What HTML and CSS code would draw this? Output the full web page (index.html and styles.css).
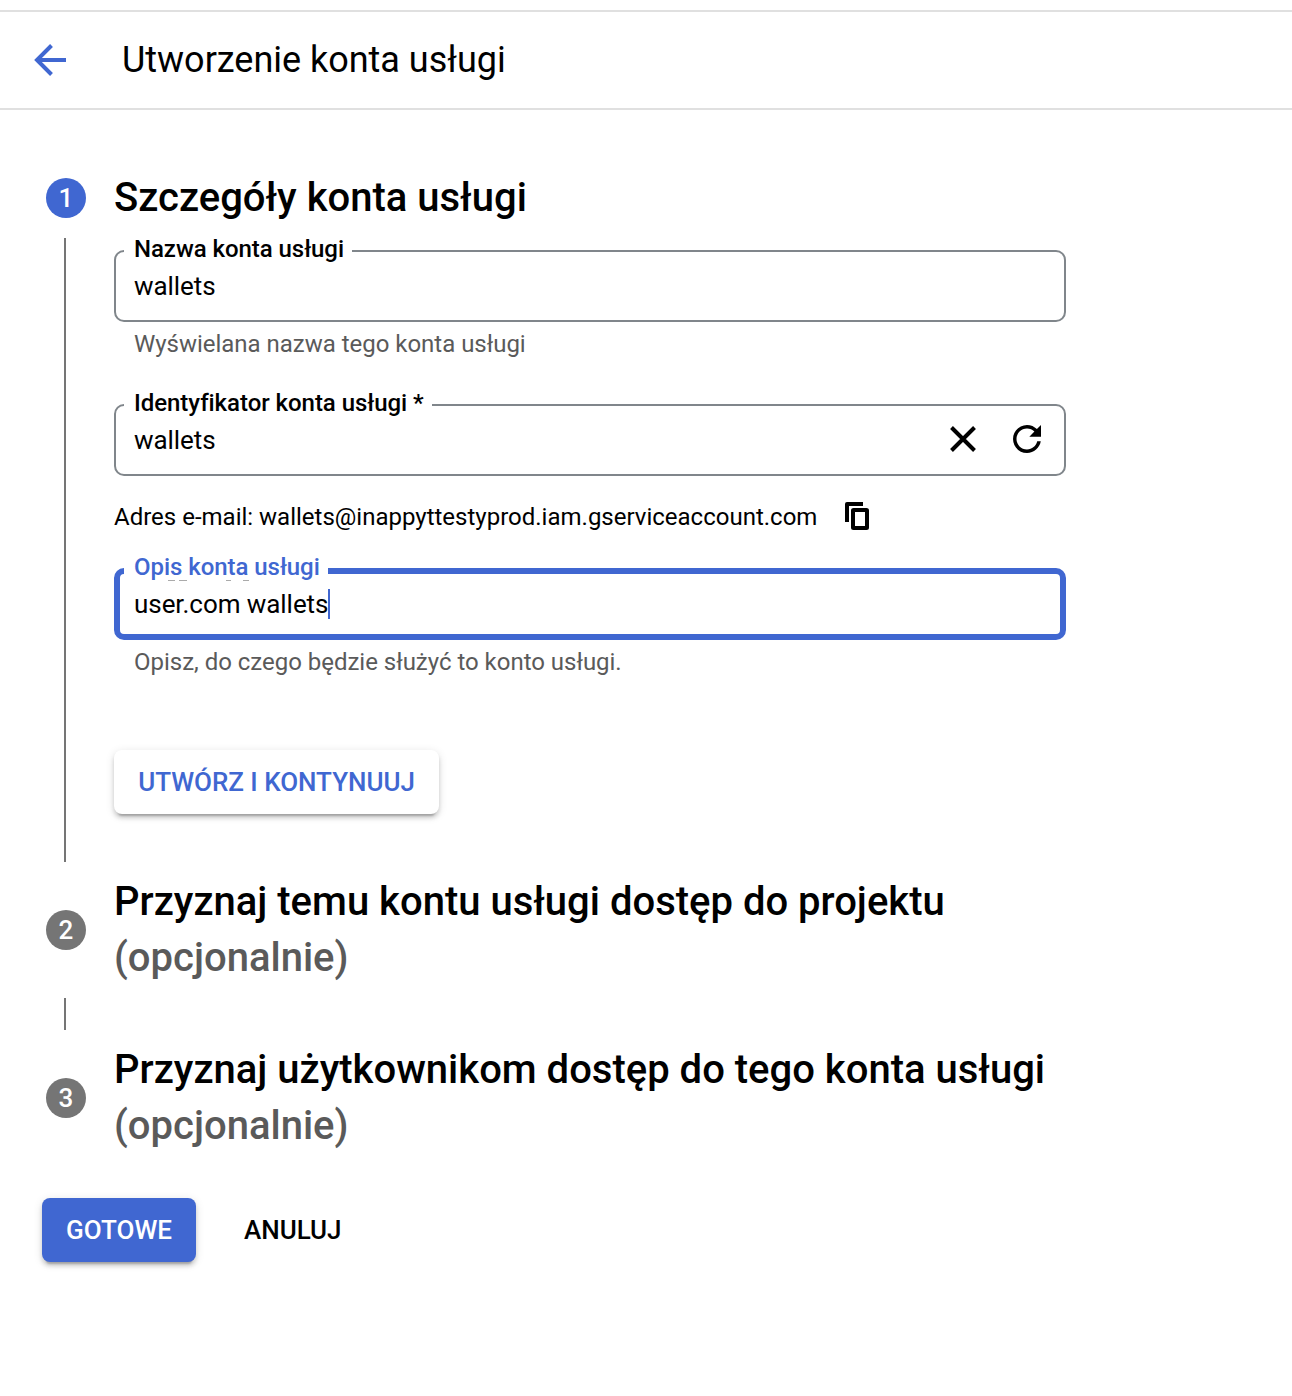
FILE: index.html
```html
<!DOCTYPE html>
<html lang="pl">
<head>
<meta charset="utf-8">
<title>Utworzenie konta usługi</title>
<link rel="stylesheet" href="styles.css">
</head>
<body>
<header class="topbar">
  <svg class="back" viewBox="0 0 32 32"><path d="M17.5 1.5 3 16l14.500 14.500M3 16h29" fill="none" stroke="currentColor" stroke-width="4"/></svg>
  <h1 class="page-title">Utworzenie konta usługi</h1>
</header>
<main class="stepper">
  <section class="step">
    <span class="badge badge-active">1</span>
    <h2 class="step-title">Szczegóły konta usługi</h2>
    <div class="rail"></div>
    <div class="step-body">
      <div class="field">
        <span class="label">Nazwa konta usługi</span>
        <span class="value">wallets</span>
      </div>
      <p class="hint">Wyświelana nazwa tego konta usługi</p>
      <div class="field field-id">
        <span class="label">Identyfikator konta usługi *</span>
        <span class="value">wallets</span>
        <svg class="clear" viewBox="0 0 26 26"><path d="M1.500 1.500l23 23M24.500 1.500l-23 23" stroke="currentColor" stroke-width="4"/></svg>
        <svg class="refresh" viewBox="0 0 18 18"><path fill="currentColor" d="M9 13.500c-2.490 0-4.500-2.010-4.500-4.500S6.510 4.500 9 4.500c1.240 0 2.360.520 3.170 1.330L10 8h5V3l-1.760 1.760C12.150 3.680 10.660 3 9 3 5.690 3 3.010 5.690 3.010 9S5.690 15 9 15c2.970 0 5.430-2.160 5.900-5h-1.520c-.460 2-2.240 3.500-4.380 3.500z"/></svg>
      </div>
      <div class="email">
        <span class="email-text">Adres e-mail: wallets@inappyttestyprod.iam.gserviceaccount.com</span>
        <svg class="copy" viewBox="0 0 24 28"><path d="M0 20V2q0-2 2-2h16v4H4v16z" fill="currentColor"/><rect x="8" y="8" width="14" height="18" rx="0.500" fill="#fff" stroke="currentColor" stroke-width="4"/></svg>
      </div>
      <div class="field field-focus">
        <span class="label">Opis konta usługi</span>
        <span class="value">user.com wallets</span><span class="caret"></span>
        <svg class="residue" viewBox="0 0 84 2"><path d="M2 .5h7M13 .5h8M60 .5h5M77 .5h6" stroke="#aaa"/></svg>
      </div>
      <p class="hint">Opisz, do czego będzie służyć to konto usługi.</p>
      <button class="btn btn-raised">UTWÓRZ I KONTYNUUJ</button>
    </div>
  </section>
  <section class="step">
    <span class="badge">2</span>
    <h2 class="step-title">Przyznaj temu kontu usługi dostęp do projektu<br><span class="optional">(opcjonalnie)</span></h2>
    <div class="rail rail-short"></div>
  </section>
  <section class="step">
    <span class="badge">3</span>
    <h2 class="step-title">Przyznaj użytkownikom dostęp do tego konta usługi<br><span class="optional">(opcjonalnie)</span></h2>
  </section>
</main>
<footer class="actions">
  <button class="btn btn-primary">GOTOWE</button>
  <button class="btn btn-text">ANULUJ</button>
</footer>
</body>
</html>
```

FILE: styles.css
```css
* { box-sizing: border-box; }
body {
  margin: 0;
  padding-top: 10px;
  min-height: 1396px;
  background: #fff;
  color: #000;
  font-family: Roboto, "Liberation Sans", sans-serif;
}
h1, h2, p { margin: 0; }
svg { display: block; flex: none; }

.topbar {
  display: flex;
  align-items: center;
  height: 100px;
  padding-left: 34px;
  border-top: 2px solid #e0e0e0;
  border-bottom: 2px solid #e0e0e0;
}
.back { width: 32px; height: 32px; margin-right: 56px; color: #4067d1; }
.page-title {
  font-size: 36px;
  font-weight: 400;
  line-height: 48px;
  letter-spacing: -0.02px;
  white-space: nowrap;
}

.stepper { padding: 60px 0 0 46px; }
.step {
  display: grid;
  grid-template-columns: 40px 952px;
  column-gap: 28px;
  align-items: center;
}
.badge {
  width: 40px;
  height: 40px;
  border-radius: 50%;
  background: #757575;
  color: #fff;
  font-size: 26px;
  font-weight: 500;
  line-height: 41px;
  text-align: center;
}
.badge-active { background: #4067d1; }
.step-title {
  font-size: 40px;
  font-weight: 500;
  line-height: 56px;
  white-space: nowrap;
}
.optional { color: #5a5a5a; }
.rail {
  align-self: stretch;
  width: 2px;
  margin: 12px 0 12px 18px;
  background: #757575;
}
.rail-short { height: 32px; }
.step-body { height: 648px; padding-top: 24px; }

.field {
  position: relative;
  display: flex;
  align-items: center;
  height: 72px;
  padding: 0 18px;
  border: 2px solid #80868b;
  border-radius: 10px;
}
.label {
  position: absolute;
  top: -17px;
  left: 8px;
  padding: 0 8px 0 10px;
  background: #fff;
  font-size: 24px;
  font-weight: 500;
  line-height: 28px;
  letter-spacing: -0.05px;
  white-space: nowrap;
}
.value { font-size: 26px; line-height: 32px; letter-spacing: -0.06px; white-space: nowrap; }
.hint {
  height: 28px;
  margin: 8px 0 0 20px;
  color: #5a5a5a;
  font-size: 24px;
  line-height: 28px;
  letter-spacing: -0.02px;
  white-space: nowrap;
}
.field-id { padding-right: 16px; margin-top: 46px; }
.clear { width: 26px; height: 26px; margin: -2px 30px 0 auto; }
.refresh { width: 42px; height: 42px; margin-top: -2px; }
.email {
  display: flex;
  align-items: center;
  gap: 28px;
  height: 32px;
  margin: 24px 0 36px;
  font-size: 24px;
  line-height: 28px;
  white-space: nowrap;
}
.email-text { padding-top: 2px; }
.copy { width: 24px; height: 28px; }
.field-focus { padding: 0 14px; border: 6px solid #4067d1; }
.field-focus .label { top: -21px; left: 4px; color: #4067d1; }
.caret { width: 2px; height: 30px; background: #4067d1; }
.residue { position: absolute; top: 6px; left: 46px; width: 84px; height: 2px; }

.btn {
  height: 64px;
  padding: 0 24px;
  border: 0;
  border-radius: 8px;
  font: 500 26px/64px Roboto, sans-serif;
  letter-spacing: -0.02px;
  white-space: nowrap;
}
.btn-raised, .btn-primary {
  box-shadow: 0 6px 2px -4px rgba(0,0,0,.2), 0 4px 4px rgba(0,0,0,.14), 0 2px 10px rgba(0,0,0,.12);
}
.btn-raised { display: block; width: 325px; margin-top: 74px; background: #fff; color: #4067d1; }
.btn-primary { width: 154px; background: #4067d1; color: #fff; }
.btn-text { background: none; color: #000; }
.actions { display: flex; gap: 24px; padding: 44px 0 0 42px; }
```
